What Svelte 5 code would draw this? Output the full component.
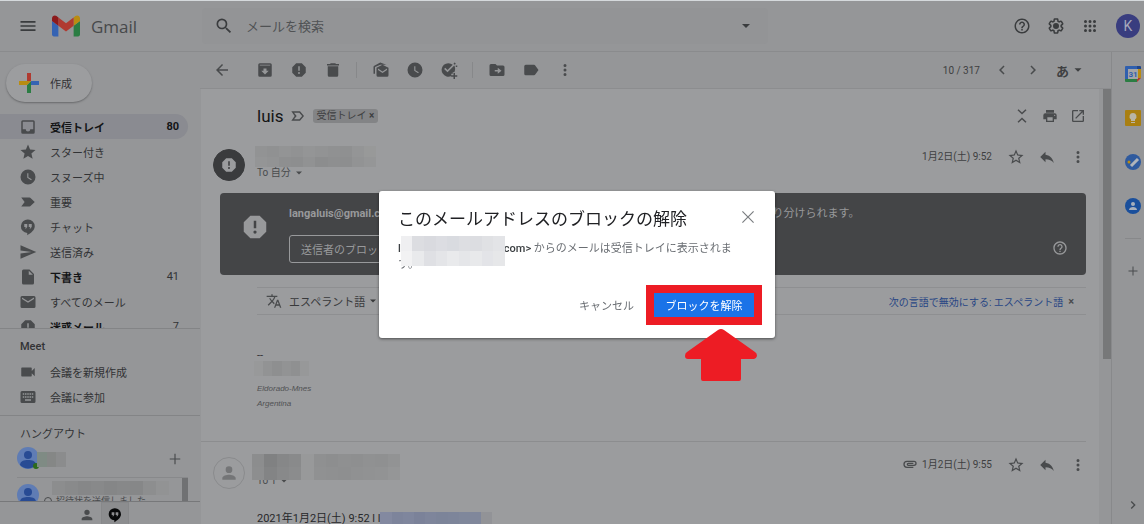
<script lang="ts">
  const icons: Record<string, string> = {
    menu: "M3 18h18v-2H3v2zm0-5h18v-2H3v2zm0-7v2h18V6H3z",
    search:
      "M15.5 14h-.79l-.28-.27A6.47 6.47 0 0 0 16 9.5 6.5 6.5 0 1 0 9.5 16c1.61 0 3.09-.59 4.23-1.57l.27.28v.79l5 4.99L20.49 19l-4.99-5zm-6 0C7.01 14 5 11.99 5 9.5S7.01 5 9.5 5 14 7.01 14 9.5 11.99 14 9.5 14z",
    caret: "M6 9l6 6 6-6z",
    help: "M11 18h2v-2h-2v2zm1-16C6.48 2 2 6.48 2 12s4.48 10 10 10 10-4.48 10-10S17.52 2 12 2zm0 18c-4.41 0-8-3.59-8-8s3.59-8 8-8 8 3.59 8 8-3.59 8-8 8zm0-14c-2.21 0-4 1.79-4 4h2c0-1.1.9-2 2-2s2 .9 2 2c0 2-3 1.75-3 5h2c0-2.25 3-2.5 3-5 0-2.21-1.79-4-4-4z",
    gear: "M13.85 22.25h-3.7c-.74 0-1.36-.54-1.45-1.27l-.27-1.89c-.27-.14-.53-.29-.79-.46l-1.8.72c-.7.26-1.47-.03-1.81-.65L2.2 15.53c-.35-.66-.2-1.44.36-1.88l1.53-1.19c-.01-.15-.02-.3-.02-.46 0-.15.01-.31.02-.46l-1.52-1.19c-.59-.45-.74-1.26-.37-1.88l1.85-3.19c.34-.62 1.11-.9 1.79-.63l1.81.73c.26-.17.52-.32.78-.46l.27-1.91c.09-.7.71-1.25 1.44-1.25h3.7c.74 0 1.36.54 1.45 1.27l.27 1.89c.27.14.53.29.79.46l1.8-.72c.71-.26 1.48.03 1.82.65l1.84 3.18c.36.66.2 1.44-.36 1.88l-1.52 1.19c.01.15.02.3.02.46s-.01.31-.02.46l1.52 1.19c.56.45.72 1.23.37 1.86l-1.86 3.22c-.34.62-1.11.9-1.8.63l-1.8-.72c-.26.17-.52.32-.78.46l-.27 1.91c-.1.68-.72 1.22-1.46 1.22zm-3.23-2h2.76l.37-2.55.53-.22c.44-.18.88-.44 1.34-.78l.45-.34 2.38.96 1.38-2.4-2.03-1.58.07-.56c.03-.26.06-.51.06-.78s-.03-.53-.06-.78l-.07-.56 2.03-1.58-1.39-2.4-2.39.96-.45-.35c-.42-.32-.87-.58-1.33-.77l-.52-.22-.37-2.55h-2.76l-.37 2.55-.53.21c-.44.19-.88.44-1.34.79l-.45.33-2.38-.95-1.39 2.39 2.03 1.58-.07.56a7 7 0 0 0-.06.79c0 .26.02.53.06.78l.07.56-2.03 1.58 1.38 2.4 2.39-.96.45.35c.43.33.86.58 1.33.77l.53.22.38 2.55zM12 8a4 4 0 1 0 0 8 4 4 0 0 0 0-8z",
    apps: "M6 8a2 2 0 1 0 0-4 2 2 0 0 0 0 4zm6 0a2 2 0 1 0 0-4 2 2 0 0 0 0 4zm6 0a2 2 0 1 0 0-4 2 2 0 0 0 0 4zM6 14a2 2 0 1 0 0-4 2 2 0 0 0 0 4zm6 0a2 2 0 1 0 0-4 2 2 0 0 0 0 4zm6 0a2 2 0 1 0 0-4 2 2 0 0 0 0 4zM6 20a2 2 0 1 0 0-4 2 2 0 0 0 0 4zm6 0a2 2 0 1 0 0-4 2 2 0 0 0 0 4zm6 0a2 2 0 1 0 0-4 2 2 0 0 0 0 4z",
    back: "M20 11H7.83l5.59-5.59L12 4l-8 8 8 8 1.41-1.41L7.83 13H20v-2z",
    archive:
      "M19 3H5a2 2 0 0 0-2 2v14a2 2 0 0 0 2 2h14a2 2 0 0 0 2-2V5a2 2 0 0 0-2-2zM5 5h14v1H5V5zm7 13l-5-5h3v-3h4v3h3l-5 5z",
    spam: "M15.73 3H8.27L3 8.27v7.46L8.27 21h7.46L21 15.73V8.27L15.73 3zM12 17.3a1.3 1.3 0 1 1 0-2.6 1.3 1.3 0 0 1 0 2.6zm1-4.3h-2V7h2v6z",
    trash: "M5 19a2 2 0 0 0 2 2h10a2 2 0 0 0 2-2V7H5v12zM20 4h-4l-1-1H9L8 4H4v2h16V4z",
    unread:
      "M6 9l8-4 8 4v10a2 2 0 0 1-2 2H8a2 2 0 0 1-2-2V9zM8 10v2l6 4 6-4v-2l-6 4-6-4zM2 17V8a2 2 0 0 1 1-1.700L11 2l8 3h-8L4 8v9z",
    clock:
      "M12 2a10 10 0 1 0 0 20 10 10 0 0 0 0-20zm4.200 14.200L11 13V7h1.500v5.200l4.500 2.700-.8 1.300z",
    task: "M20 12a9 9 0 0 1-1 3h-2v2h-2v3a9 9 0 1 1 2-15l-7 7-3-3-1.500 1.500L10 15l9-9a9 9 0 0 1 1 6zM19 2l2 1-1 2-2-1zM21 6h2v2h-2zM18 16h2v3h3v2h-3v3h-2v-3h-3v-2h3z",
    move: "M20 6h-8l-2-2H4a2 2 0 0 0-2 2v12a2 2 0 0 0 2 2h16a2 2 0 0 0 2-2V8a2 2 0 0 0-2-2zm-7 11v-3H9v-2h4V9l5 4-5 4z",
    label:
      "M17.630 5.840A2 2 0 0 0 16 5H5a2 2 0 0 0-2 2v10a2 2 0 0 0 2 2h11a2 2 0 0 0 1.630-.840L22 12l-4.370-6.160z",
    more: "M12 8a2 2 0 1 0 0-4 2 2 0 0 0 0 4zm0 6a2 2 0 1 0 0-4 2 2 0 0 0 0 4zm0 6a2 2 0 1 0 0-4 2 2 0 0 0 0 4z",
    prev: "M15.410 7.410L14 6l-6 6 6 6 1.410-1.410L10.830 12z",
    next: "M10 6L8.590 7.410 13.170 12l-4.580 4.590L10 18l6-6z",
    collapse:
      "M7.400 3L6 4.400l6 5.600 6-5.600L16.600 3 12 7.300zM7.400 21L6 19.600l6-5.600 6 5.600-1.400 1.400-4.600-4.300z",
    print:
      "M19 8H5a3 3 0 0 0-3 3v6h4v4h12v-4h4v-6a3 3 0 0 0-3-3zm-3 11H8v-5h8v5zm3-7a1 1 0 1 1 0-2 1 1 0 0 1 0 2zm-1-9H6v4h12V3z",
    open: "M19 19H5V5h7V3H5a2 2 0 0 0-2 2v14a2 2 0 0 0 2 2h14a2 2 0 0 0 2-2v-7h-2v7zM14 3v2h3.590l-9.830 9.830 1.410 1.410L19 6.410V10h2V3h-7z",
    star: "M12 17.270L18.180 21l-1.640-7.030L22 9.240l-7.190-.61L12 2 9.190 8.630 2 9.240l5.460 4.730L5.820 21z",
    starOutline:
      "M22 9.240l-7.190-.62L12 2 9.190 8.630 2 9.240l5.460 4.730L5.820 21 12 17.270 18.180 21l-1.630-7.030L22 9.240zM12 15.400l-3.760 2.270 1-4.280-3.320-2.880 4.380-.38L12 6.100l1.710 4.040 4.380.38-3.320 2.880 1 4.280L12 15.400z",
    reply: "M10 9V5l-7 7 7 7v-4.100c5 0 8.500 1.600 11 5.100-1-5-4-10-11-11z",
    inbox:
      "M19 3H5a2 2 0 0 0-2 2v14a2 2 0 0 0 2 2h14a2 2 0 0 0 2-2V5a2 2 0 0 0-2-2zm0 12h-4a3 3 0 0 1-6 0H5V5h14v10z",
    important: "M3 18h11a2 2 0 0 0 1.700-.9L21 12l-5.300-5.100A2 2 0 0 0 14 6H3l4.500 6z",
    importantOutline:
      "M2 19h13l6-7-6-7H2l5 7zM6 17l4-5-4-5h8l4.300 5-4.300 5z",
    chat: "M12 2a9 9 0 0 0-1 18v3c5-3 10-7 10-12a9 9 0 0 0-9-9zM11 11.500L9.500 14H8l1-2H7V8h4zm6 0L15.500 14H14l1-2h-2V8h4z",
    send: "M2 21l21-9L2 3v7l15 2-15 2z",
    draft: "M14 2H6a2 2 0 0 0-2 2v16a2 2 0 0 0 2 2h12a2 2 0 0 0 2-2V8zM13 9V3.500L18.500 9z",
    mail: "M20 4H4a2 2 0 0 0-2 2v12a2 2 0 0 0 2 2h16a2 2 0 0 0 2-2V6a2 2 0 0 0-2-2zm0 4l-8 5-8-5V6l8 5 8-5v2z",
    video:
      "M17 10.500V7a1 1 0 0 0-1-1H4a1 1 0 0 0-1 1v10a1 1 0 0 0 1 1h12a1 1 0 0 0 1-1v-3.500l4 4v-11z",
    keyboard:
      "M20 4H4a2 2 0 0 0-2 2v12a2 2 0 0 0 2 2h16a2 2 0 0 0 2-2V6a2 2 0 0 0-2-2zm-9 3h2v2h-2zm0 4h2v2h-2zM8 7h2v2H8zm0 4h2v2H8zm-1 2H5v-2h2zm0-4H5V7h2zm9 8H8v-2h8zm0-4h-2v-2h2zm0-4h-2V7h2zm3 4h-2v-2h2zm0-4h-2V7h2z",
    person:
      "M12 12a4 4 0 1 0 0-8 4 4 0 0 0 0 8zm0 2c-2.670 0-8 1.340-8 4v2h16v-2c0-2.660-5.330-4-8-4z",
    plus: "M21 13h-8v8h-2v-8H3v-2h8V3h2v8h8z",
    close: "M20 5.100L18.900 4 12 10.900 5.100 4 4 5.100l6.900 6.900L4 18.900 5.100 20l6.900-6.900 6.900 6.900 1.100-1.100-6.900-6.900z",
    clip: "M2 12.500A5.500 5.500 0 0 1 7.500 7H18a4 4 0 0 1 0 8H9.500a2.500 2.500 0 0 1 0-5H17v2H9.500a.5.5 0 0 0 0 1H18a2 2 0 0 0 0-4H7.500a3.500 3.500 0 0 0 0 7H17v2H7.500A5.500 5.500 0 0 1 2 12.500z",
    translate:
      "M12.870 15.070l-2.540-2.510.03-.03A17.500 17.500 0 0 0 14.070 6H17V4h-7V2H8v2H1v2h11.170C11.500 7.920 10.440 9.750 9 11.350 8.070 10.320 7.300 9.190 6.690 8h-2c.73 1.630 1.730 3.170 2.980 4.560l-5.090 5.020L4 19l5-5 3.110 3.110.76-2.040zM18.500 10h-2L12 22h2l1.120-3h4.750L21 22h2l-4.500-12zm-2.620 7l1.620-4.330L19.120 17h-3.240z",
  };

  const folders = [
    { icon: "inbox", name: "受信トレイ", count: "80", bold: true, active: true },
    { icon: "star", name: "スター付き" },
    { icon: "clock", name: "スヌーズ中" },
    { icon: "important", name: "重要" },
    { icon: "chat", name: "チャット" },
    { icon: "send", name: "送信済み" },
    { icon: "draft", name: "下書き", count: "41", bold: true },
    { icon: "mail", name: "すべてのメール" },
    { icon: "spam", name: "迷惑メール", count: "7", bold: true },
  ];

  const meet = [
    { icon: "video", name: "会議を新規作成" },
    { icon: "keyboard", name: "会議に参加" },
  ];

  const tools = [
    [
      ["archive", "アーカイブ"],
      ["spam", "迷惑メールを報告"],
      ["trash", "削除"],
    ],
    [
      ["unread", "未読にする"],
      ["clock", "スヌーズ"],
      ["task", "ToDo リストに追加"],
    ],
    [
      ["move", "移動"],
      ["label", "ラベル"],
      ["more", "その他"],
    ],
  ];

  // one array per row, one colour per block
  const senderBlocks = [
    ["#929394", "#909192", "#939495", "#919293", "#949596", "#929394", "#909192", "#8f9091", "#949596", "#989999"],
    ["#949596", "#929394", "#8e8f90", "#8d8e8f", "#919293", "#8c8d8e", "#8e8f90", "#8d8e8f", "#929394", "#959697"],
  ];
  const replyBlocks = [
    ["#8c8d8e", "#808182", "#868788", "#898a8b", "#98999a", "#8f9091", "#8d8e8f", "#8f9091", "#8e8f90", "#909192", "#8f9091", "#929394"],
    ["#8d8e8f", "#838485", "#88898a", "#8b8c8d", "#98999a", "#909192", "#8f9091", "#8e8f90", "#909192", "#919293", "#929394", "#959697"],
  ];
  const signBlocks = [["#98999a", "#929394", "#8e8f90", "#929394", "#8f9091", "#979899"]];
  const quoteBlocks = [["#8389a0", "#7d849b", "#7f869d", "#7b8299", "#7e859b", "#7c8499", "#7d859a", "#7f879b", "#80879b", "#929397"]];
  const contactBlocks = [["#7f8b84", "#858786", "#8b8c8d"]];
  const inviteBlocks = [["#8c8d8e", "#898a8b", "#868788", "#88898a", "#858687", "#878889", "#868788", "#8d8e8f", "#929394"]];
  const addressBlocks = [
    ["#efeff1", "#dcdde1", "#d9dadf", "#dcdde2", "#d9dbe0", "#dddee2", "#dcdde1", "#e0e1e4", "#e3e4e7"],
    ["#f2f2f3", "#e9eaec", "#dfe0e4", "#e4e5e8", "#e9eaec", "#e5e6e9", "#e8e9eb", "#e3e4e8", "#e6e7e9"],
  ];

  let query = $state("");
  let dialogOpen = $state(true);
</script>

{#snippet icon(name: string, size = 18)}
  <svg width={size} height={size} viewBox="0 0 24 24" fill="currentColor" fill-rule="evenodd" aria-hidden="true">
    <path d={icons[name]} />
  </svg>
{/snippet}

{#snippet mosaic(rows: string[][], kind: string)}
  <span class="mosaic {kind}">
    {#each rows as row}
      <span class="mosaic-row">
        {#each row as color}
          <span style:background={color}></span>
        {/each}
      </span>
    {/each}
  </span>
{/snippet}

{#snippet face()}
  <svg class="face" width="22" height="22" viewBox="0 0 22 22" aria-hidden="true">
    <circle cx="11" cy="11" r="11" fill="#5f7cb4" />
    <circle cx="11" cy="8" r="4" fill="#284b94" />
    <path d="M3 18c0-4 4-5 8-5s8 1 8 5a11 11 0 0 1-16 0z" fill="#284b94" />
  </svg>
{/snippet}

{#snippet mailActions()}
  <button class="icon-btn act" aria-label="スター">{@render icon("starOutline")}</button>
  <button class="icon-btn act" aria-label="返信">{@render icon("reply")}</button>
  <button class="icon-btn act" aria-label="その他">{@render icon("more")}</button>
{/snippet}

<div class="page">
  <header>
    <div class="brand">
      <button class="icon-btn menu" aria-label="メインメニュー">{@render icon("menu", 20)}</button>
      <svg width="28" height="22" viewBox="52 42 88 66" aria-hidden="true">
        <path fill="#3563b3" d="M58 108h14V74L52 59v43c0 3.320 2.690 6 6 6" />
        <path fill="#2b7d43" d="M120 108h14c3.320 0 6-2.690 6-6V59l-20 15" />
        <path fill="#b98c12" d="M120 48v26l20-15v-8c0-7.420-8.470-11.650-14.400-7.200" />
        <path fill="#b03a30" d="M72 74V48l24 18 24-18v26L96 92" />
        <path fill="#8c1a1c" d="M52 51v8l20 15V48l-5.600-4.200c-5.940-4.450-14.400-.22-14.400 7.200" />
      </svg>
      <span class="brand-name">Gmail</span>
    </div>
    <form class="search" onsubmit={(e) => e.preventDefault()}>
      <button class="icon-btn" aria-label="検索">{@render icon("search", 20)}</button>
      <input type="text" bind:value={query} placeholder="メールを検索" aria-label="メールを検索" />
      <button type="button" class="icon-btn" aria-label="検索オプション">{@render icon("caret", 16)}</button>
    </form>
    <div class="account">
      <button class="icon-btn" aria-label="サポート">{@render icon("help")}</button>
      <button class="icon-btn" aria-label="設定">{@render icon("gear")}</button>
      <button class="icon-btn" aria-label="Google アプリ">{@render icon("apps")}</button>
      <button class="user">K</button>
    </div>
  </header>

  <div class="body">
    <aside class="sidebar">
      <button class="compose">
        <svg width="20" height="20" viewBox="0 0 20 20" aria-hidden="true">
          <path fill="#b03a30" d="M8 0h4v8H8z" />
          <path fill="#3563b3" d="M12 8h8v4h-8z" />
          <path fill="#2b7d43" d="M8 12l4-4v12H8z" />
          <path fill="#b98c12" d="M0 8h12l-4 4H0z" />
        </svg>
        作成
      </button>

      <nav class="folders">
        {#each folders as folder}
          <a href="#{folder.icon}" class="row" class:bold={folder.bold} class:active={folder.active}>
            {@render icon(folder.icon)}
            <span class="name">{folder.name}</span>
            {#if folder.count}<span>{folder.count}</span>{/if}
          </a>
        {/each}
      </nav>

      <section class="meet">
        <h2>Meet</h2>
        {#each meet as item}
          <a href="#{item.icon}" class="row">
            {@render icon(item.icon)}
            <span class="name">{item.name}</span>
          </a>
        {/each}
      </section>

      <section class="hangouts">
        <h2>ハングアウト</h2>
        <div class="contact">
          {@render face()}
          <span class="online"></span>
          {@render mosaic(contactBlocks, "contact-mask")}
          <button class="icon-btn" aria-label="新しい会話">{@render icon("plus", 14)}</button>
        </div>
        <div class="contact invited">
          {@render face()}
          {@render mosaic(inviteBlocks, "invite-mask")}
          <span class="invite"><i></i>招待状を送信しました</span>
          <span class="thumb"></span>
        </div>
      </section>

      <div class="tabs">
        <button class="icon-btn" aria-label="連絡先">{@render icon("person", 16)}</button>
        <button class="icon-btn selected" aria-label="ハングアウト">{@render icon("chat", 16)}</button>
      </div>
    </aside>

    <main>
      <div class="toolbar">
        <button class="icon-btn first" aria-label="戻る">{@render icon("back")}</button>
        {#each tools as group, i}
          {#if i > 0}<span class="sep"></span>{/if}
          {#each group as [name, label]}
            <button class="icon-btn" aria-label={label}>{@render icon(name)}</button>
          {/each}
        {/each}
        <span class="pager">10 / 317</span>
        <button class="icon-btn act" aria-label="前">{@render icon("prev")}</button>
        <button class="icon-btn act" aria-label="次">{@render icon("next")}</button>
        <button class="ime">あ{@render icon("caret", 14)}</button>
      </div>

      <div class="scroller">
        <div class="thread">
          <div class="subject">
            <h1>luis</h1>
            {@render icon("importantOutline", 16)}
            <span class="chip">受信トレイ <button aria-label="ラベルを削除">×</button></span>
            <span class="subject-actions">
              <button class="icon-btn" aria-label="すべて折りたたむ">{@render icon("collapse")}</button>
              <button class="icon-btn" aria-label="印刷">{@render icon("print", 16)}</button>
              <button class="icon-btn" aria-label="新しいウィンドウ">{@render icon("open", 16)}</button>
            </span>
          </div>

          <article>
            <div class="mail-head">
              <span class="avatar blocked">{@render icon("spam")}</span>
              <div class="from">
                {@render mosaic(senderBlocks, "sender-mask")}
                <span class="to">To 自分 {@render icon("caret", 12)}</span>
              </div>
              <time>1月2日(土) 9:52</time>
              {@render mailActions()}
            </div>

            <div class="banner">
              {@render icon("spam", 30)}
              <div class="banner-text">
                <p><b>langaluis@gmail.com</b> をブロックしました。このアドレスから今後届くメールは、迷惑メールに振り分けられます。</p>
                <button>送信者のブロックを解除</button>
              </div>
              <button class="icon-btn help" aria-label="ヘルプ">{@render icon("help", 16)}</button>
            </div>

            <div class="translate">
              {@render icon("translate", 16)}
              <button class="lang">エスペラント語 {@render icon("caret", 12)}</button>
              <a href="#disable">次の言語で無効にする: エスペラント語</a>
              <button class="dismiss" aria-label="閉じる">×</button>
            </div>

            <div class="signature">
              <p>--</p>
              {@render mosaic(signBlocks, "sign-mask")}
              <em>Eldorado-Mnes</em>
              <em>Argentina</em>
            </div>
          </article>

          <article class="second">
            <div class="mail-head">
              <span class="avatar">{@render icon("person", 20)}</span>
              <div class="from">
                {@render mosaic(replyBlocks, "reply-mask")}
                <span class="to under">To 1 {@render icon("caret", 12)}</span>
              </div>
              <span class="clip">{@render icon("clip", 16)}</span>
              <time>1月2日(土) 9:55</time>
              {@render mailActions()}
            </div>
            <p class="quote">2021年1月2日(土) 9:52 l l{@render mosaic(quoteBlocks, "quote-mask")}</p>
          </article>
        </div>
        <div class="track"><span></span></div>
      </div>
    </main>

    <aside class="addons">
      <button class="icon-btn" aria-label="カレンダー">
        <svg width="16" height="16" viewBox="0 0 16 16" aria-hidden="true">
          <path fill="#2f5fae" d="M1 0h11v3H3v10H0V1a1 1 0 0 1 1-1z" />
          <path fill="#21468c" d="M12 0h3a1 1 0 0 1 1 1v3h-4z" />
          <path fill="#b98c12" d="M13 3h3v9h-3z" />
          <path fill="#2b7d43" d="M3 13h9v3H1a1 1 0 0 1-1-1v-2z" />
          <path fill="#b03a30" d="M12 12h4l-4 4z" />
          <path fill="#a3a5a8" d="M3 3h10v10H3z" />
          <text x="8" y="11" text-anchor="middle">31</text>
        </svg>
      </button>
      <button class="icon-btn" aria-label="Keep">
        <svg width="16" height="16" viewBox="0 0 16 16" aria-hidden="true">
          <rect width="16" height="16" rx="1" fill="#a97f12" />
          <path fill="#b9b5a6" d="M8 3a3.500 3.500 0 0 0-2 6.400V11h4V9.400A3.500 3.500 0 0 0 8 3zM6 12h4v1H6z" />
        </svg>
      </button>
      <button class="icon-btn" aria-label="ToDo リスト">
        <svg width="16" height="16" viewBox="0 0 16 16" aria-hidden="true">
          <circle cx="8" cy="8" r="8" fill="#2f5a9e" />
          <path d="M6 12l7-7" stroke="#b0b4ba" stroke-width="3" />
          <circle cx="4" cy="8" r="1.500" fill="#b98c12" />
        </svg>
      </button>
      <button class="icon-btn" aria-label="連絡先">
        <svg width="16" height="16" viewBox="0 0 16 16" aria-hidden="true">
          <circle cx="8" cy="8" r="8" fill="#1a4f9c" />
          <circle cx="8" cy="6" r="2" fill="#a7afbb" />
          <path fill="#a7afbb" d="M4 12c0-2 2-3 4-3s4 1 4 3z" />
        </svg>
      </button>
      <hr />
      <button class="icon-btn" aria-label="アドオンを取得">{@render icon("plus", 12)}</button>
      <button class="icon-btn hide" aria-label="サイドパネルを非表示">{@render icon("next", 16)}</button>
    </aside>
  </div>
</div>

{#if dialogOpen}
  <div class="overlay">
    <div class="dialog" role="dialog" aria-labelledby="dialog-title">
      <div class="dialog-head">
        <h2 id="dialog-title">このメールアドレスのブロックの解除</h2>
        <button class="icon-btn" aria-label="閉じる" onclick={() => (dialogOpen = false)}>{@render icon("close")}</button>
      </div>
      <p>
        <b>l<span class="address">{@render mosaic(addressBlocks, "address-mask")}</span>com&gt;</b>
        からのメールは受信トレイに表示されます。
      </p>
      <div class="dialog-actions">
        <button class="cancel" onclick={() => (dialogOpen = false)}>キャンセル</button>
        <span class="frame">
          <button class="confirm" onclick={() => (dialogOpen = false)}>ブロックを解除</button>
          <svg class="arrow" width="72" height="52" viewBox="0 0 72 52" aria-hidden="true">
            <path fill="#ed1c24" d="M33 1q3-2 6 0l31 22q2 1 2 4-1 3-3 3H56v20q0 2-2 2H18q-2 0-2-2V30H3q-3 0-3-3 0-3 2-4z" />
          </svg>
        </span>
      </div>
    </div>
  </div>
{/if}

<style>
  :global(body) {
    background: #959698;
  }
  .page,
  .overlay {
    font-family: Roboto, "Noto Sans CJK JP", sans-serif;
    font-size: 11px;
    color: #323335;
  }
  .page {
    height: 100vh;
    display: flex;
    flex-direction: column;
    overflow: hidden;
  }
  button,
  input {
    font: inherit;
    color: inherit;
    background: none;
    border: 0;
    padding: 0;
  }
  a {
    color: inherit;
    text-decoration: none;
  }
  h1,
  h2,
  p {
    margin: 0;
    font-weight: 400;
  }
  svg {
    flex: none;
  }
  .icon-btn {
    flex: none;
    width: 34px;
    height: 28px;
    display: flex;
    align-items: center;
    justify-content: center;
    color: #494b4d;
  }
  .icon-btn.act {
    width: 31px;
  }

  header {
    flex: none;
    height: 50px;
    display: flex;
    align-items: center;
    border-top: 1px solid #d5d9dc;
    border-bottom: 1px solid #8a8b8d;
  }
  header .icon-btn {
    color: #3a3c3e;
  }
  .brand {
    width: 200px;
    flex: none;
    display: flex;
    align-items: center;
  }
  .menu {
    margin: 0 7px 0 11px;
  }
  .brand-name {
    margin-left: 11px;
    font-family: "Open Sans", sans-serif;
    font-size: 17px;
    color: #47494b;
  }
  .search {
    flex: 0 1 566px;
    height: 36px;
    margin-left: 2px;
    display: flex;
    align-items: center;
    gap: 5px;
    border-radius: 4px;
    background: #939496;
    padding: 0 5px;
    box-sizing: border-box;
  }
  .search input {
    flex: 1;
    min-width: 0;
    font-size: 13px;
    outline: none;
  }
  .search input::placeholder {
    color: #505254;
    opacity: 1;
  }
  .account {
    margin-left: auto;
    padding-right: 4px;
    display: flex;
    align-items: center;
  }
  .user {
    width: 24px;
    height: 24px;
    margin-left: 9px;
    border-radius: 50%;
    background: #393d7f;
    color: #a5a7bb;
    font-size: 14px;
  }

  .body {
    flex: 1;
    min-height: 0;
    display: flex;
  }
  .sidebar {
    width: 200px;
    flex: none;
    display: flex;
    flex-direction: column;
  }
  .sidebar svg {
    color: #494b4d;
  }
  .compose {
    flex: none;
    align-self: flex-start;
    width: 86px;
    height: 38px;
    margin: 12px 6px;
    padding-left: 13px;
    display: flex;
    align-items: center;
    gap: 11px;
    border-radius: 19px;
    background: #9c9d9f;
    box-shadow: 0 1px 2px #68696b;
  }
  .folders {
    flex: 1;
    min-height: 0;
    overflow: hidden;
  }
  .row {
    height: 25px;
    margin-right: 12px;
    padding: 0 9px 0 19px;
    display: flex;
    align-items: center;
    gap: 13px;
    border-radius: 0 13px 13px 0;
  }
  .row .name {
    flex: 1;
  }
  .row.bold .name {
    font-weight: 700;
    color: #131416;
  }
  .row.active {
    background: #8a8b91;
    color: #131416;
    font-weight: 700;
  }
  .sidebar h2 {
    height: 24px;
    line-height: 24px;
    padding-left: 20px;
    font-size: 11px;
  }
  .meet {
    flex: none;
    padding: 6px 0;
    border-top: 1px solid #838486;
    border-bottom: 1px solid #838486;
  }
  .meet h2 {
    font-weight: 500;
  }
  .hangouts {
    flex: none;
    height: 78px;
    padding-top: 7px;
    overflow: hidden;
  }
  .contact {
    position: relative;
    height: 30px;
    margin: 0 12px 0 17px;
    display: flex;
    align-items: flex-start;
    justify-content: space-between;
  }
  .contact .icon-btn {
    width: 26px;
    height: 24px;
  }
  .online {
    position: absolute;
    left: 16px;
    top: 16px;
    width: 6px;
    height: 6px;
    border-radius: 50%;
    background: #2d6b1c;
  }
  .mosaic {
    display: flex;
    flex-direction: column;
  }
  .mosaic-row {
    flex: 1;
    display: flex;
  }
  .mosaic-row span {
    flex: 1;
  }
  .contact-mask {
    position: absolute;
    left: 20px;
    top: 5px;
    width: 29px;
    height: 15px;
  }
  .invited {
    height: 40px;
    border-top: 1px solid #88898b;
    padding-top: 6px;
    box-sizing: border-box;
  }
  .invite-mask {
    position: absolute;
    z-index: 1;
    left: 35px;
    top: 3px;
    width: 117px;
    height: 14px;
  }
  .invite {
    position: absolute;
    left: 27px;
    top: 17px;
    display: flex;
    align-items: center;
    gap: 4px;
    font-size: 9px;
    line-height: 12px;
    color: #494b4d;
  }
  .invite i {
    width: 6px;
    height: 6px;
    border: 1px solid #494b4d;
    border-radius: 50%;
  }
  .thumb {
    width: 6px;
    height: 34px;
    margin-top: -6px;
    background: #707173;
  }
  .tabs {
    flex: none;
    height: 22px;
    padding-left: 1px;
    display: flex;
    justify-content: center;
    border-top: 1px solid #77787a;
  }
  .tabs .icon-btn {
    width: 28px;
    height: 26px;
  }
  .tabs .selected {
    background: #8c8d8f;
    border: 1px solid #87888a;
    box-sizing: border-box;
  }
  .tabs .selected :global(svg) {
    color: #08090a;
  }

  main {
    flex: 1;
    min-width: 0;
    display: flex;
    flex-direction: column;
  }
  .toolbar {
    flex: none;
    height: 36px;
    padding: 0 26px 0 5px;
    display: flex;
    align-items: center;
    border-bottom: 1px solid #8c8d8f;
  }
  .first {
    margin-right: 9px;
  }
  .sep {
    width: 1px;
    height: 16px;
    margin: 0 7px 0 6px;
    background: #87888a;
  }
  .pager {
    margin: 0 7px 0 auto;
    font-size: 10px;
    color: #3e3f41;
  }
  .ime {
    margin-left: 7px;
    display: flex;
    align-items: center;
    gap: 2px;
    font-size: 13px;
    font-weight: 700;
    color: #3e3f41;
  }
  .scroller {
    flex: 1;
    min-height: 0;
    display: flex;
  }
  .thread {
    flex: 1;
    min-width: 0;
    margin-left: 1px;
    overflow: hidden;
    background: #9b9c9e;
  }
  .track {
    width: 8px;
    flex: none;
    margin-left: 4px;
  }
  .track span {
    display: block;
    height: 62%;
    background: #777879;
  }
  .subject {
    height: 54px;
    padding: 0 7px 0 56px;
    display: flex;
    align-items: center;
    color: #494b4d;
  }
  .subject h1 {
    margin-right: 7px;
    font-size: 17px;
    color: #131415;
  }
  .chip {
    margin-left: 7px;
    padding: 0 4px 0 3px;
    border-radius: 3px;
    background: #838486;
    font-size: 10px;
    line-height: 14px;
    color: #3e3f41;
  }
  .chip button {
    font-weight: 700;
  }
  .subject-actions {
    margin-left: auto;
    display: flex;
  }
  .subject-actions .icon-btn {
    width: 28px;
  }
  .mail-head {
    height: 47px;
    padding: 3px 6px 0 12px;
    display: flex;
    align-items: flex-start;
  }
  .avatar {
    width: 32px;
    height: 32px;
    margin: 3px 10px 0 0;
    display: flex;
    align-items: center;
    justify-content: center;
    box-sizing: border-box;
    border: 1px solid #8a8b8d;
    border-radius: 50%;
    color: #747577;
  }
  .blocked {
    background: #3a3b3d;
    border-color: #3a3b3d;
    color: #9b9c9e;
  }
  .from {
    flex: 1;
  }
  .sender-mask {
    width: 121px;
    height: 21px;
  }
  .to {
    display: flex;
    align-items: center;
    gap: 2px;
    margin-left: 2px;
    font-size: 10px;
    line-height: 12px;
    color: #494b4d;
  }
  time {
    margin-right: 8px;
    font-size: 10px;
    line-height: 21px;
    color: #3e3f41;
  }
  .mail-head .icon-btn {
    height: 22px;
  }
  .banner {
    margin: 0 13px 0 19px;
    height: 82px;
    padding: 0 18px 0 20px;
    display: flex;
    align-items: center;
    gap: 19px;
    box-sizing: border-box;
    border-radius: 4px;
    background: #444547;
    color: #98999b;
  }
  .banner > :global(svg) {
    margin-bottom: 14px;
  }
  .banner-text {
    flex: 1;
    min-width: 0;
  }
  .banner-text p {
    line-height: 16px;
    margin-bottom: 13px;
    white-space: nowrap;
  }
  .banner-text button {
    height: 28px;
    padding: 0 11px;
    border: 1px solid #98999b;
    border-radius: 3px;
  }
  .banner .help {
    width: 16px;
    color: #98999b;
    margin-top: 28px;
  }
  .translate {
    margin: 12px 13px 0 56px;
    height: 26px;
    padding: 0 12px 0 9px;
    display: flex;
    align-items: center;
    border: solid #8e8f91;
    border-width: 1px 0;
    color: #494b4d;
  }
  .lang {
    margin-left: 7px;
    display: flex;
    align-items: center;
    gap: 2px;
    color: #38393b;
  }
  .translate a {
    margin-left: auto;
    font-size: 10px;
    color: #284684;
  }
  .dismiss {
    margin-left: 5px;
    font-weight: 700;
  }
  .signature {
    margin: 35px 0 30px 56px;
  }
  .signature p {
    line-height: 11px;
  }
  .sign-mask {
    width: 55px;
    height: 15px;
    margin: 0 0 5px -3px;
  }
  .signature em {
    display: block;
    font-family: "Liberation Sans", sans-serif;
    font-size: 8px;
    line-height: 15px;
    color: #505153;
  }
  .second {
    margin-right: 13px;
    padding-top: 9px;
    border-top: 1px solid #8c8d8f;
  }
  .second .mail-head {
    padding-right: 0;
    margin-right: -7px;
  }
  .second .from {
    margin-left: -3px;
  }
  .reply-mask {
    position: relative;
    z-index: 1;
    width: 148px;
    height: 26px;
  }
  .under {
    margin: -5px 0 0 5px;
  }
  .clip {
    margin: 2px 4px 0 0;
    color: #494b4d;
  }
  .quote {
    padding: 10px 0 0 56px;
    display: flex;
    align-items: center;
    line-height: 16px;
    white-space: pre;
    color: #27282a;
  }
  .quote-mask {
    width: 112px;
    height: 14px;
  }

  .addons {
    width: 33px;
    flex: none;
    display: flex;
    flex-direction: column;
    align-items: center;
    gap: 16px;
    padding: 8px 0 5px 10px;
    box-sizing: border-box;
    border-left: 1px solid #88898b;
  }
  .addons text {
    font: 700 8px Roboto, sans-serif;
    fill: #2f5fae;
  }
  .addons hr {
    width: 16px;
    margin: 2px 0;
    border: 0;
    border-top: 1px solid #87888a;
  }
  .addons .hide {
    margin-top: auto;
  }

  .overlay {
    position: fixed;
    inset: 0;
    display: grid;
    place-items: center;
    padding: 5px 0 0 10px;
  }
  .dialog {
    width: 396px;
    padding: 14px 13px 13px 19px;
    box-sizing: border-box;
    border-radius: 3px;
    background: #fff;
    box-shadow: 0 1px 3px rgba(0, 0, 0, 0.5);
  }
  .dialog-head {
    display: flex;
    align-items: center;
    justify-content: space-between;
    height: 24px;
  }
  .dialog-head h2 {
    font-size: 17px;
    color: #202124;
  }
  .dialog-head .icon-btn {
    width: 28px;
    color: #7a7d80;
  }
  .dialog p {
    margin: 12px 19px 12px 0;
    line-height: 16px;
    color: #6a6e73;
  }
  .dialog b {
    font-weight: 500;
    color: #3c4043;
  }
  .address {
    position: relative;
    display: inline-block;
    width: 103px;
  }
  .address-mask {
    position: absolute;
    left: 0;
    bottom: -14px;
    width: 104px;
    height: 30px;
  }
  .dialog-actions {
    display: flex;
    align-items: center;
    justify-content: flex-end;
    gap: 12px;
  }
  .cancel {
    color: #6a6e73;
  }
  .frame {
    position: relative;
    display: flex;
    border: 8px solid #ed1c24;
  }
  .confirm {
    width: 100px;
    height: 24px;
    background: #1a73e8;
    color: #fff;
  }
  .arrow {
    position: absolute;
    left: 31px;
    top: 36px;
  }
</style>
